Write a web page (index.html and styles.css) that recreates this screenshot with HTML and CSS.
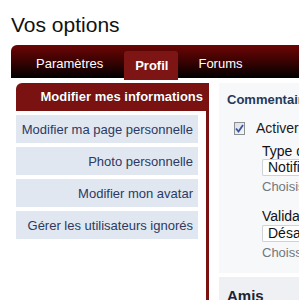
FILE: index.html
```html
<!DOCTYPE html>
<html lang="fr">
<head>
<meta charset="utf-8">
<title>Vos options</title>
<link rel="stylesheet" href="styles.css">
</head>
<body>
<h1 class="title">Vos options</h1>
<nav class="tabbar">
  <a class="tab tab-first">Paramètres</a>
  <a class="tab tab-active">Profil</a>
  <a class="tab">Forums</a>
</nav>
<div class="main">
  <aside class="sidenav">
    <div class="side-head">Modifier mes informations</div>
    <a class="side-item">Modifier ma page personnelle</a>
    <a class="side-item">Photo personnelle</a>
    <a class="side-item">Modifier mon avatar</a>
    <a class="side-item">Gérer les utilisateurs ignorés</a>
  </aside>
  <section class="content">
    <div class="panel">
      <h2 class="panel-title">Commentaires</h2>
      <label class="check-row">
        <span class="checkbox"><svg width="9" height="9" viewBox="0 0 9 9"><path d="M1 4.5 L3.5 7.5 L8 1" fill="none" stroke="#3654a0" stroke-width="1.8"/></svg></span>
        <span class="check-label">Activer les commentaires</span>
      </label>
      <div class="field">
        <div class="field-label">Type de notification</div>
        <div class="select">Notifier par e-mail</div>
        <div class="hint">Choisissez le type</div>
      </div>
      <div class="field field-second">
        <div class="field-label">Validation</div>
        <div class="select">Désactivée</div>
        <div class="hint">Choississez</div>
      </div>
    </div>
    <div class="panel panel-alt">
      <h2 class="panel-title panel-title-bold">Amis</h2>
    </div>
  </section>
</div>
</body>
</html>
```
FILE: styles.css
```css
html, body {
  margin: 0;
  padding: 0;
  background: #ffffff;
  overflow: hidden;
}
body {
  width: 299px;
  height: 300px;
  padding-left: 11px;
  box-sizing: border-box;
  font-family: "Liberation Sans", Arial, sans-serif;
}
.title {
  margin: 0;
  padding-top: 13px;
  height: 45px;
  box-sizing: border-box;
  font-size: 21px;
  font-weight: normal;
  line-height: 24px;
  color: #111111;
}
.tabbar {
  display: flex;
  width: 300px;
  height: 33px;
  box-sizing: border-box;
  padding-top: 4px;
  background: linear-gradient(to bottom, #6e0505 0%, #3a0202 50%, #000000 100%);
  border-top-left-radius: 6px;
}
.tab {
  display: block;
  font-size: 13px;
  line-height: 29px;
  height: 29px;
  color: #ffffff;
  padding: 0 20px;
}
.tab-first {
  padding-left: 25px;
  padding-right: 21px;
}
.tab-active {
  margin-top: 2px;
  height: 29px;
  padding: 0 10px 0 11px;
  background: #7d1515;
  font-weight: bold;
  border-top-left-radius: 3px;
  border-top-right-radius: 3px;
  position: relative;
  z-index: 1;
}
.main {
  display: flex;
  margin-top: 5px;
  padding-left: 5px;
  align-items: stretch;
  height: 217px;
}
.sidenav {
  width: 193px;
  flex: none;
  box-sizing: border-box;
  border-right: 3px solid #7a1212;
  display: flex;
  flex-direction: column;
  gap: 4px;
}
.side-head {
  height: 28px;
  line-height: 28px;
  background: #7a1212;
  color: #ffffff;
  font-weight: bold;
  font-size: 13px;
  text-align: right;
  padding-right: 3px;
  border-top-left-radius: 6px;
  text-shadow: 0 0 1px #300000;
}
.side-item {
  display: block;
  height: 28px;
  box-sizing: border-box;
  margin-right: 8px;
  padding: 2px 5px 0 0;
  line-height: 26px;
  background: #e1e7f0;
  color: #2b3a63;
  font-size: 13px;
  text-align: right;
}
.content {
  margin-left: 10px;
  flex: 1;
  min-width: 0;
  display: flex;
  flex-direction: column;
  gap: 4px;
}
.panel {
  background: #f7f8fa;
  height: 190px;
  flex: none;
  box-sizing: border-box;
  padding: 8px 0 0 8px;
  white-space: nowrap;
  overflow: hidden;
}
.panel-alt {
  background: #eef0f3;
  padding-top: 10px;
}
.panel-title {
  margin: 0;
  font-size: 13px;
  line-height: 18px;
  font-weight: bold;
  color: #1f3a5c;
}
.panel-title-bold {
  font-size: 15px;
  font-weight: bold;
  color: #1b2436;
}
.check-row {
  display: flex;
  align-items: center;
  gap: 11px;
  margin: 12px 0 0 7px;
  height: 14px;
}
.checkbox {
  width: 13px;
  height: 13px;
  box-sizing: border-box;
  border: 1px solid #8c8f94;
  background: linear-gradient(135deg, #dcdee2, #f6f7f8);
  display: flex;
  align-items: center;
  justify-content: center;
}
.check-label {
  font-size: 14px;
  color: #1a1a1a;
}
.field {
  margin-left: 35px;
  margin-top: 8px;
}
.field-second {
  margin-top: 13px;
}
.field-label {
  font-size: 14px;
  line-height: 16px;
  color: #111111;
}
.select {
  margin-top: 0;
  height: 17px;
  box-sizing: border-box;
  border: 1px solid #cfd2d6;
  border-right: none;
  border-radius: 2px 0 0 2px;
  background: #ffffff;
  font-size: 14px;
  line-height: 15px;
  padding-left: 5px;
  color: #111111;
}
.field-second .select {
  margin-top: 1px;
}
.hint {
  font-size: 13px;
  line-height: 16px;
  color: #6f7780;
  margin-top: 3px;
}
```
